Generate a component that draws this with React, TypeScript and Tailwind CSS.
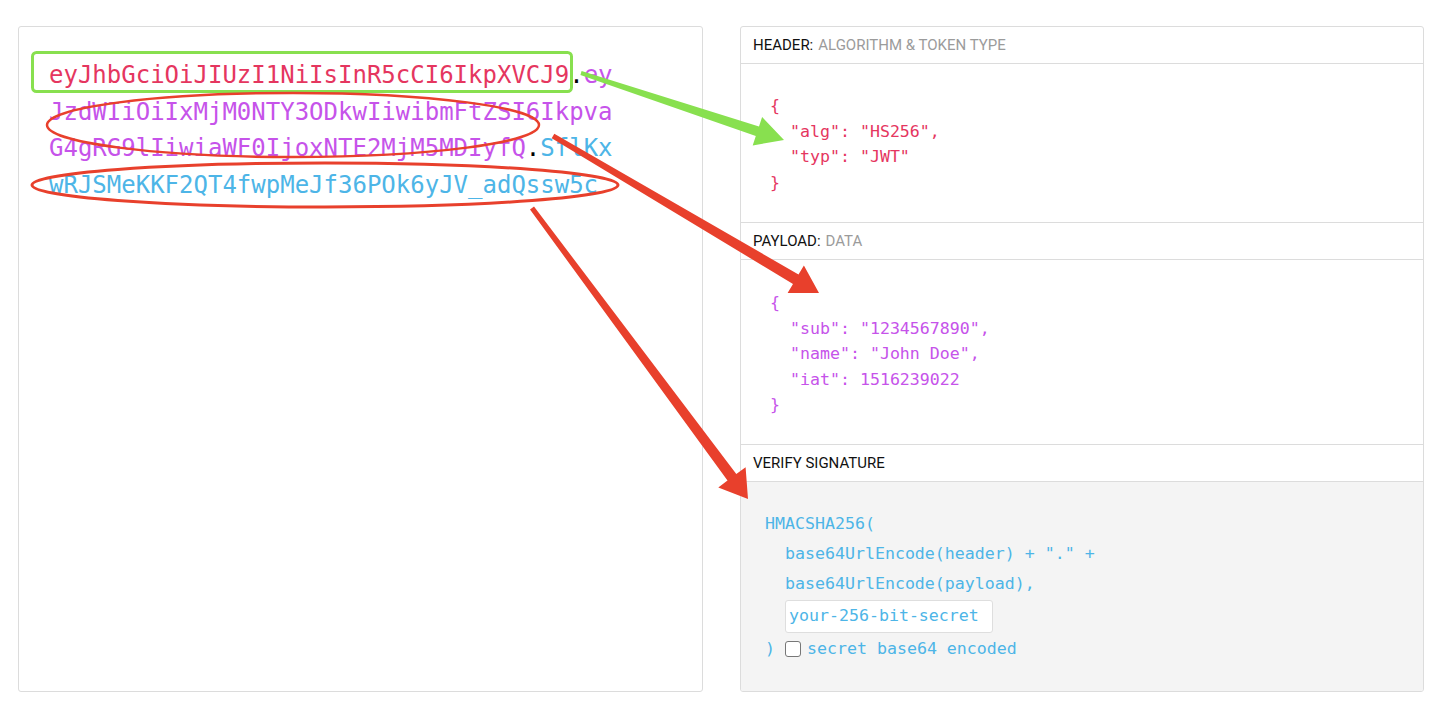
const mono = "font-['DejaVu_Sans_Mono','Liberation_Mono',monospace]";

type Pt = [number, number];

// tapered arrow polygon from start to tip
function arrowPoints(
  start: Pt,
  tip: Pt,
  w0: number,
  w1: number,
  headLen: number,
  headHalf: number
) {
  const dx = tip[0] - start[0];
  const dy = tip[1] - start[1];
  const len = Math.hypot(dx, dy);
  const ux = dx / len;
  const uy = dy / len;
  const nx = -uy;
  const ny = ux;
  const bx = tip[0] - ux * headLen;
  const by = tip[1] - uy * headLen;
  const pts: Pt[] = [
    [start[0] + (nx * w0) / 2, start[1] + (ny * w0) / 2],
    [bx + (nx * w1) / 2, by + (ny * w1) / 2],
    [bx + nx * headHalf, by + ny * headHalf],
    tip,
    [bx - nx * headHalf, by - ny * headHalf],
    [bx - (nx * w1) / 2, by - (ny * w1) / 2],
    [start[0] - (nx * w0) / 2, start[1] - (ny * w0) / 2],
  ];
  return pts.map((p) => `${p[0].toFixed(1)},${p[1].toFixed(1)}`).join(' ');
}

function Annotations() {
  return (
    <svg
      className="absolute inset-0 pointer-events-none"
      width={1436}
      height={706}
      viewBox="0 0 1436 706"
    >
      {/* green box around header part */}
      <rect x={32.5} y={52.5} width={539} height={39} rx={4} fill="none" stroke="#88e04f" strokeWidth={3} />
      <polygon points={arrowPoints([581, 73], [784, 140], 4, 10, 28, 15)} fill="#88e04f" />
      {/* red ellipses */}
      <ellipse cx={293} cy={125} rx={246} ry={32} fill="none" stroke="#e8402c" strokeWidth={2.5} />
      <ellipse cx={325} cy={185} rx={293} ry={22} fill="none" stroke="#e8402c" strokeWidth={3} />
      {/* red arrows */}
      <polygon points={arrowPoints([553, 136], [819, 293], 5, 11, 27, 16)} fill="#e8402c" />
      <polygon points={arrowPoints([532, 208], [748, 499], 5, 11, 27, 17)} fill="#e8402c" />
    </svg>
  );
}

function SectionLabel({ title, sub }: { title: string; sub?: string }) {
  return (
    <div className="h-[37px] flex items-center px-3 border-b border-[#dcdcdc] font-['Roboto',sans-serif] text-[15px] uppercase">
      <span className="text-[#111]">{title}</span>
      {sub && <span className="ml-[5px] text-[#9b9b9b]">{sub}</span>}
    </div>
  );
}

export default function App() {
  return (
    <div className="relative w-[1436px] h-[706px] bg-white overflow-hidden">
      <div className="flex gap-[37px] pl-[18px] pt-[26px]">
        {/* Encoded token */}
        <div className="w-[685px] h-[666px] border border-[#dcdcdc] rounded-[3px] pl-[30px] pt-[30px]">
          <div className={`${mono} w-[570px] break-all text-[24px] leading-[36.5px]`}>
            <span className="text-[#e5365f]">eyJhbGciOiJIUzI1NiIsInR5cCI6IkpXVCJ9</span>
            <span className="text-black">.</span>
            <span className="text-[#c653ea]">
              eyJzdWIiOiIxMjM0NTY3ODkwIiwibmFtZSI6IkpvaG4gRG9lIiwiaWF0IjoxNTE2MjM5MDIyfQ
            </span>
            <span className="text-black">.</span>
            <span className="text-[#4db5e7]">SflKxwRJSMeKKF2QT4fwpMeJf36POk6yJV_adQssw5c</span>
          </div>
        </div>

        {/* Decoded */}
        <div className="w-[684px] h-[666px] border border-[#dcdcdc] rounded-[3px] flex flex-col overflow-hidden">
          <SectionLabel title="Header:" sub="Algorithm & Token Type" />
          <div className={`${mono} h-[159px] border-b border-[#dcdcdc] pl-[29px] pt-[29px] text-[16.6px] leading-[25.5px] text-[#e5365f] whitespace-pre`}>
            <div>{'{'}</div>
            <div>{'  "alg": "HS256",'}</div>
            <div>{'  "typ": "JWT"'}</div>
            <div>{'}'}</div>
          </div>

          <SectionLabel title="Payload:" sub="Data" />
          <div className={`${mono} h-[185px] border-b border-[#dcdcdc] pl-[29px] pt-[30px] text-[16.6px] leading-[25.5px] text-[#c653ea] whitespace-pre`}>
            <div>{'{'}</div>
            <div>{'  "sub": "1234567890",'}</div>
            <div>{'  "name": "John Doe",'}</div>
            <div>{'  "iat": 1516239022'}</div>
            <div>{'}'}</div>
          </div>

          <SectionLabel title="Verify Signature" />
          <div className={`${mono} flex-1 bg-[#f4f4f4] pl-[24px] pt-[27px] text-[16.6px] leading-[30px] text-[#4db5e7] whitespace-pre`}>
            <div>HMACSHA256(</div>
            <div className="pl-[20px]">{'base64UrlEncode(header) + "." +'}</div>
            <div className="pl-[20px]">base64UrlEncode(payload),</div>
            <div className="pl-[20px] py-[1px]">
              <div className="w-[208px] h-[33px] bg-white border border-[#dedede] rounded-[3px] flex items-center pl-[3px] leading-none">
                your-256-bit-secret
              </div>
            </div>
            <div className="flex items-center">
              <span className="w-[20px]">)</span>
              <span className="w-[16px] h-[16px] rounded-[3px] border border-[#777] bg-white" />
              <span className="ml-[6px]">secret base64 encoded</span>
            </div>
          </div>
        </div>
      </div>

      <Annotations />
    </div>
  );
}
